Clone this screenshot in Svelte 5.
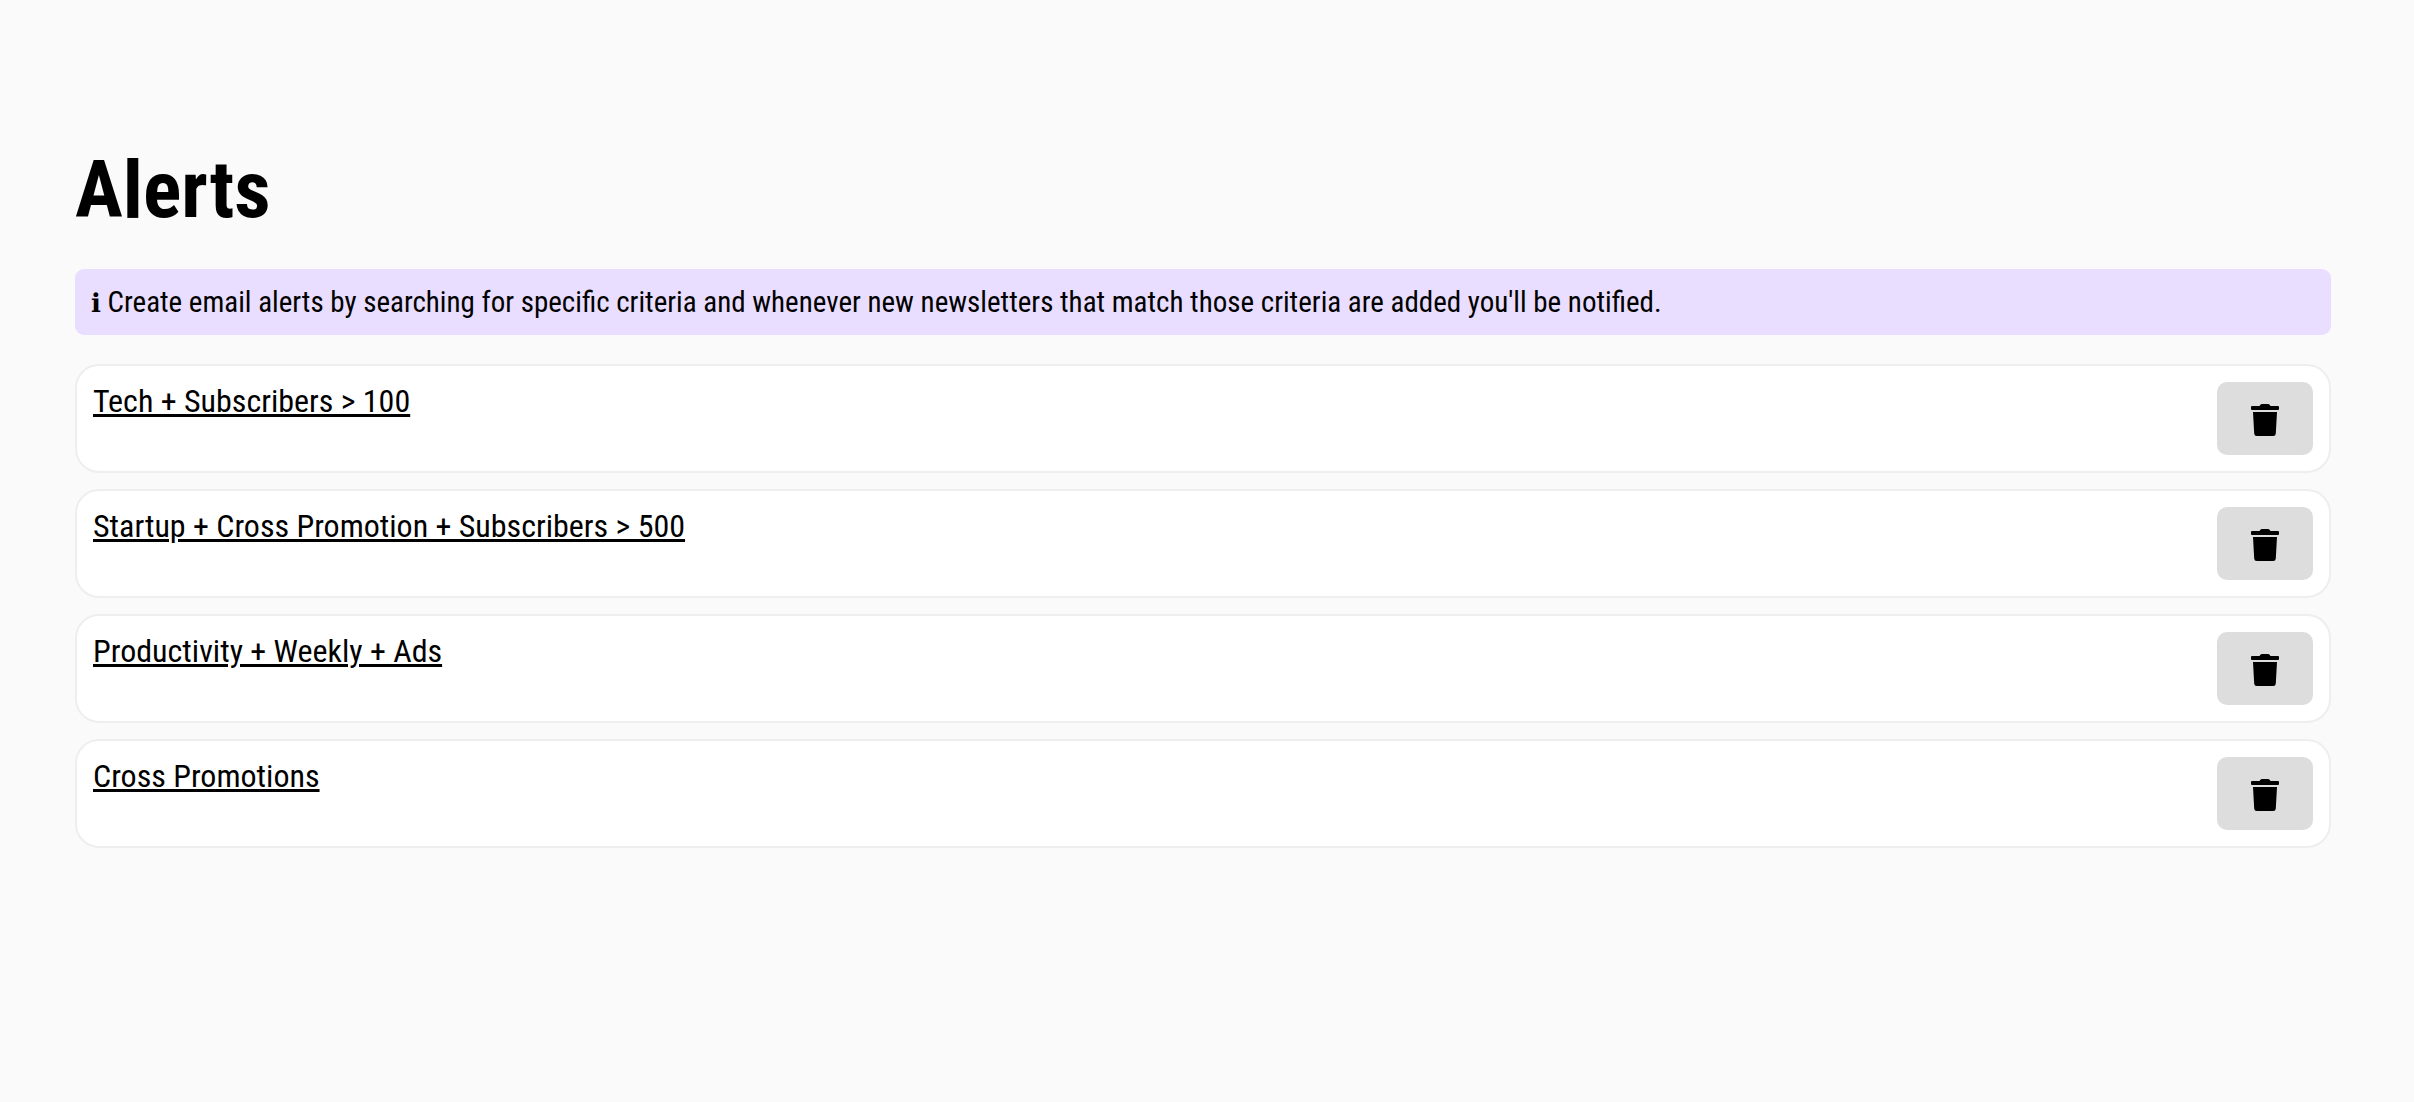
<script>
  let alerts = $state([
    { id: 1, name: 'Tech + Subscribers > 100' },
    { id: 2, name: 'Startup + Cross Promotion + Subscribers > 500' },
    { id: 3, name: 'Productivity + Weekly + Ads' },
    { id: 4, name: 'Cross Promotions' }
  ]);

  function remove(id) {
    alerts = alerts.filter((alert) => alert.id !== id);
  }
</script>

<main>
  <h1>Alerts</h1>
  <p class="notice">
    <span class="info">ℹ</span> Create email alerts by searching for specific criteria and whenever new newsletters that match those criteria are added you'll be notified.
  </p>
  <ul>
    {#each alerts as alert (alert.id)}
      <li>
        <a href="#alert-{alert.id}">{alert.name}</a>
        <button type="button" aria-label="Delete {alert.name}" onclick={() => remove(alert.id)}>
          <svg viewBox="0 0 28 32" width="28" height="32" aria-hidden="true">
            <path d="M1 2h7.500l.9-1.200A2 2 0 0 1 11 0h6a2 2 0 0 1 1.600.8l.9 1.200H27a1 1 0 0 1 1 1v2a1 1 0 0 1-1 1H1a1 1 0 0 1-1-1V3a1 1 0 0 1 1-1z" />
            <path d="M2 8h24l-1.200 21.500A2.600 2.600 0 0 1 22.200 32H5.800A2.600 2.600 0 0 1 3.200 29.500z" />
          </svg>
        </button>
      </li>
    {/each}
  </ul>
</main>

<style>
  :global(body) {
    background: #fafafa;
    color: #000;
    font-family: 'Roboto Condensed', Roboto, sans-serif;
  }

  main {
    padding: 143px 83px 75px 75px;
  }

  h1 {
    margin: 0 0 32px;
    font-size: 80px;
    line-height: 94px;
    font-weight: 700;
  }

  .notice {
    margin: 0 0 29px;
    padding: 16px;
    border-radius: 9px;
    background: #e9deff;
    font-size: 29px;
    line-height: 34px;
  }

  .info {
    font-family: 'DejaVu Sans', sans-serif;
    font-size: 26px;
    line-height: 1;
  }

  ul {
    display: flex;
    flex-direction: column;
    gap: 16px;
    margin: 0;
    padding: 0;
    list-style: none;
  }

  li {
    display: flex;
    align-items: flex-start;
    justify-content: space-between;
    gap: 16px;
    padding: 16px;
    border: 2px solid #eee;
    border-radius: 24px;
    background: #fff;
  }

  a {
    color: inherit;
    font-size: 32px;
    line-height: 38px;
    text-decoration: underline;
    text-decoration-thickness: 3px;
  }

  button {
    display: flex;
    padding: 22px 34px 19px;
    border: 0;
    border-radius: 10px;
    background: #ddd;
    color: inherit;
    cursor: pointer;
  }

  svg {
    fill: currentColor;
  }
</style>
